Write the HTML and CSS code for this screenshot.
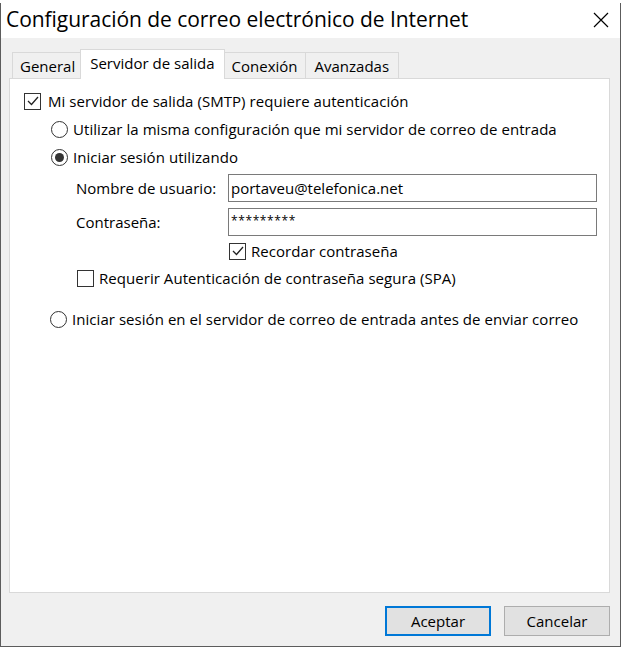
FILE: index.html
```html
<!DOCTYPE html>
<html lang="es">
<head>
<meta charset="utf-8">
<title>Configuración de correo electrónico de Internet</title>
<link rel="stylesheet" href="styles.css">
</head>
<body>
<div class="window">
  <div class="titlebar">
    <span class="title">Configuración de correo electrónico de Internet</span>
    <span class="close">
      <svg width="16" height="16" viewBox="0 0 16 16"><path d="M1 1 L15 15 M15 1 L1 15" stroke="#000" stroke-width="1.2" fill="none"/></svg>
    </span>
  </div>
  <div class="client">
    <div class="tabs">
      <div class="tab">General</div>
      <div class="tab selected">Servidor de salida</div>
      <div class="tab">Conexión</div>
      <div class="tab wide">Avanzadas</div>
    </div>
    <div class="panel">
      <div class="row r-main">
        <span class="check checked"><svg width="14" height="14" viewBox="0 0 14 14"><path d="M2 7 L5.5 10.5 L12 3" stroke="#222" stroke-width="1.3" fill="none"/></svg></span>
        <span class="lbl">Mi servidor de salida (SMTP) requiere autenticación</span>
      </div>
      <div class="row r-sub">
        <span class="radio"></span>
        <span class="lbl">Utilizar la misma configuración que mi servidor de correo de entrada</span>
      </div>
      <div class="row r-sub">
        <span class="radio on"></span>
        <span class="lbl">Iniciar sesión utilizando</span>
      </div>
      <div class="field f-user">
        <span class="flabel">Nombre de usuario:</span>
        <span class="input">portaveu@telefonica.net</span>
      </div>
      <div class="field f-pass">
        <span class="flabel">Contraseña:</span>
        <span class="input pw">*********</span>
      </div>
      <div class="row r-remember">
        <span class="check checked"><svg width="14" height="14" viewBox="0 0 14 14"><path d="M2 7 L5.5 10.5 L12 3" stroke="#222" stroke-width="1.3" fill="none"/></svg></span>
        <span class="lbl">Recordar contraseña</span>
      </div>
      <div class="row r-spa">
        <span class="check"></span>
        <span class="lbl">Requerir Autenticación de contraseña segura (SPA)</span>
      </div>
      <div class="row r-last">
        <span class="radio"></span>
        <span class="lbl">Iniciar sesión en el servidor de correo de entrada antes de enviar correo</span>
      </div>
    </div>
    <div class="buttons">
      <button class="btn default">Aceptar</button>
      <button class="btn">Cancelar</button>
    </div>
  </div>
</div>
</body>
</html>
```

FILE: styles.css
```css
* { box-sizing: border-box; }
html, body { margin: 0; padding: 0; }
body {
  width: 622px;
  height: 650px;
  overflow: hidden;
  background: #ffffff;
  font-family: "Open Sans", "Noto Sans", "Liberation Sans", sans-serif;
  color: #000;
}
.window {
  margin-top: 3px;
  width: 621px;
  height: 644px;
  border-left: 1px solid #5c5c5c;
  border-right: 1px solid #5c5c5c;
  border-bottom: 1px solid #5c5c5c;
  display: flex;
  flex-direction: column;
  background: #f0f0f0;
}
.titlebar {
  height: 35px;
  background: #fff;
  display: flex;
  align-items: center;
  justify-content: space-between;
  padding: 0 11px 0 5px;
}
.title {
  font-size: 21px;
  letter-spacing: -0.05px;
  margin-top: -3px;
}
.close { display: flex; margin-top: -2px; }
.client {
  flex: 1;
  display: flex;
  flex-direction: column;
  padding: 11px 10px 0 8px;
}
.tabs {
  display: flex;
  align-items: flex-end;
  height: 29px;
  padding-left: 3px;
  position: relative;
  z-index: 1;
}
.tab {
  height: 26px;
  border: 1px solid #d9d9d9;
  border-bottom: none;
  background: #f0f0f0;
  font-size: 15px;
  padding: 1px 7px 0 7px;
  display: flex;
  align-items: center;
  margin-right: -1px;
}
.tab.wide { padding: 1px 9px 0 9px; }
.tab.selected {
  height: 30px;
  margin: 0 -1px -1px -2px;
  padding: 0 9px 3px 9px;
  background: #fff;
  position: relative;
  z-index: 2;
}
.panel {
  height: 515px;
  background: #fff;
  border: 1px solid #d9d9d9;
  display: flex;
  flex-direction: column;
  padding-top: 8px;
}
.row {
  display: flex;
  align-items: center;
  height: 28px;
  font-size: 15px;
  letter-spacing: 0.05px;
}
.lbl { white-space: nowrap; }
.r-main { padding-left: 14px; }
.r-main .lbl { margin-left: 7px; }
.r-sub { padding-left: 41px; }
.r-sub .lbl { margin-left: 5px; }
.check {
  width: 17px;
  height: 17px;
  border: 1px solid #333;
  background: #fff;
  display: flex;
  align-items: center;
  justify-content: center;
  flex: none;
}
.radio {
  width: 17px;
  height: 17px;
  border: 1px solid #333;
  border-radius: 50%;
  background: #fff;
  flex: none;
  display: flex;
  align-items: center;
  justify-content: center;
}
.radio.on::after {
  content: "";
  width: 9px;
  height: 9px;
  border-radius: 50%;
  background: #333;
}
.field {
  display: flex;
  align-items: center;
  font-size: 15px;
  padding-left: 66px;
}
.f-user { margin-top: 3px; }
.f-pass { margin-top: 6px; }
.flabel { width: 152px; flex: none; }
.input {
  width: 369px;
  height: 28px;
  border: 1px solid #7a7a7a;
  background: #fff;
  display: flex;
  align-items: center;
  padding-left: 2px;
  font-size: 15px;
}
.input.pw { font-size: 12px; letter-spacing: 0.6px; padding-bottom: 4px; }
.r-remember { height: 24px; margin-top: 3px; padding-left: 219px; }
.r-remember .lbl { margin-left: 5px; }
.r-spa { height: 24px; margin-top: 3px; padding-left: 67px; }
.r-spa .lbl { margin-left: 5px; }
.r-last { height: 24px; margin-top: 17px; padding-left: 40px; }
.r-last .lbl { margin-left: 5px; }
.buttons {
  display: flex;
  justify-content: flex-end;
  gap: 13px;
  margin-top: 13px;
}
.btn {
  width: 106px;
  height: 30px;
  font-family: inherit;
  font-size: 15px;
  background: #e1e1e1;
  border: 1px solid #adadad;
  color: #000;
  padding: 0;
}
.btn.default { border: 2px solid #0078d7; }
```
